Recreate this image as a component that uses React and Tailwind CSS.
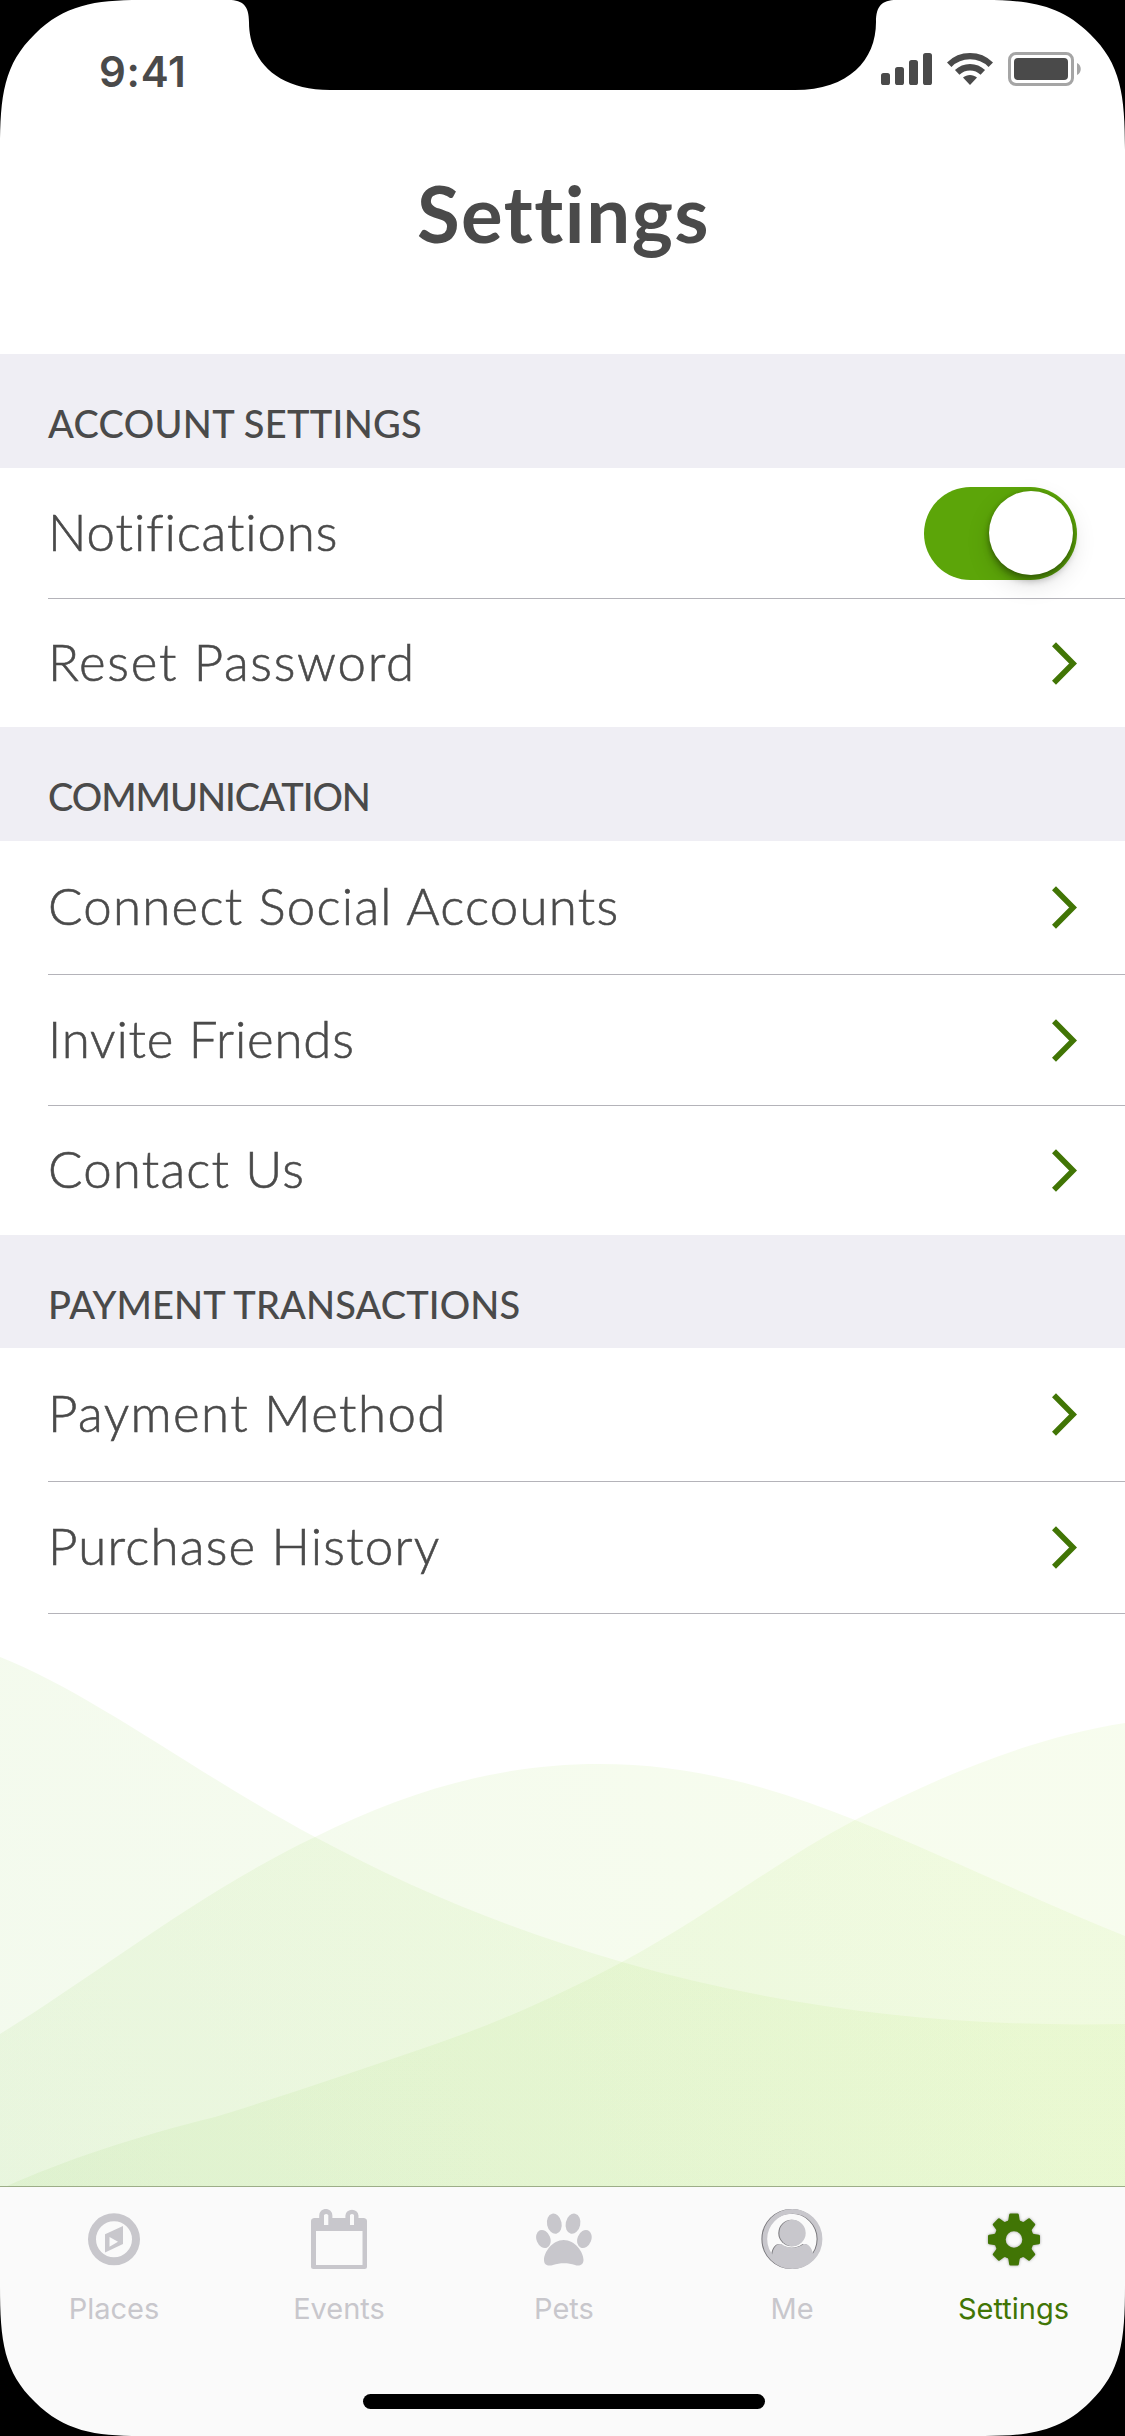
import React from "react";

const sections = [
  {
    title: "ACCOUNT SETTINGS",
    header: "h-[114px] tracking-[0.3px]",
    rows: [
      { label: "Notifications", size: "h-[131px]", text: "tracking-[0.9px]", line: true, toggle: true },
      { label: "Reset Password", size: "h-[128px]", text: "tracking-[1.7px]" },
    ],
  },
  {
    title: "COMMUNICATION",
    header: "h-[114px] tracking-[-1.05px]",
    rows: [
      { label: "Connect Social Accounts", size: "h-[134px]", text: "tracking-[1.25px]", line: true },
      { label: "Invite Friends", size: "h-[131px]", text: "tracking-[0.8px]", line: true },
      { label: "Contact Us", size: "h-[129px]", text: "tracking-[1.2px]" },
    ],
  },
  {
    title: "PAYMENT TRANSACTIONS",
    header: "h-[113px] tracking-[0.1px]",
    rows: [
      { label: "Payment Method", size: "h-[134px]", text: "tracking-[1.4px]", line: true },
      { label: "Purchase History", size: "h-[132px]", text: "tracking-[1.2px]", line: true },
    ],
  },
];

function Chevron() {
  return (
    <svg className="h-[43px] w-[25px]" viewBox="0 0 25 43" fill="none" stroke="#417505" strokeWidth="5.6">
      <path d="M2 2.2 21.1 21.5 2 40.8" />
    </svg>
  );
}

function Toggle() {
  return (
    <div className="flex h-[93px] w-[153px] items-center justify-end rounded-full bg-[#5ca509] pr-[4.5px]">
      <div className="h-[84px] w-[84px] rounded-full bg-white shadow-[0_9px_24px_rgba(0,0,0,0.13),0_6px_7px_rgba(0,0,0,0.25),0_1px_5px_rgba(0,0,0,0.22)]" />
    </div>
  );
}

function StatusIcons() {
  return (
    <div className="flex items-center">
      <svg className="h-[34px] w-[52px]" viewBox="0 0 52 34" fill="#4a4a4a">
        <rect x="0" y="21" width="9" height="12" rx="2.6" />
        <rect x="14" y="15" width="9" height="18" rx="2.6" />
        <rect x="28" y="8" width="9" height="25" rx="2.6" />
        <rect x="42" y="1" width="9" height="32" rx="2.6" />
      </svg>
      <svg className="ml-[14px] h-[34px] w-[46px]" viewBox="0 0 46 34" fill="none" stroke="#4a4a4a" strokeWidth="6.4">
        <path d="M2.2 12.7A29.6 29.6 0 0 1 43.8 12.7" />
        <path d="M10.2 20.4A18.3 18.3 0 0 1 35.8 20.4" />
        <path d="M23 33 16 25.6C20 22 26 22 30 25.6Z" fill="#4a4a4a" stroke="none" />
      </svg>
      <svg className="ml-[15px] h-[34px] w-[73px]" viewBox="0 0 73 34">
        <rect x="1.5" y="1.5" width="63" height="31" rx="6.5" fill="none" stroke="#a5a5a5" strokeWidth="3" />
        <rect x="6" y="6" width="54" height="22" rx="4" fill="#4a4a4a" />
        <path d="M69 11C74 13 74 21 69 23Z" fill="#a5a5a5" />
      </svg>
    </div>
  );
}

function PlacesIcon() {
  return (
    <svg className="h-[60px] w-[60px]" viewBox="0 0 60 60" fill="#c8c7cc">
      <circle cx="30" cy="30.3" r="22" fill="none" stroke="#c8c7cc" strokeWidth="8" />
      <path fillRule="evenodd" d="M21 25.2 39 17V35L21 43.6ZM25.5 28V37.7L34 32.7Z" />
    </svg>
  );
}

function EventsIcon() {
  return (
    <svg className="h-[60px] w-[60px]" viewBox="0 0 60 60" fill="#c8c7cc">
      <path
        fillRule="evenodd"
        d="M5 9H10.2V6.5A6.6 6.6 0 0 1 23.4 6.5V9H36.4V6.5A6.6 6.6 0 0 1 49.5 6.5V9H55Q58 9.5 58 12V57.5Q58 60 55.5 60H4.5Q2 60 2 57.5V12Q2 9.5 5 9ZM7 22V56H53.5V22ZM15 6V16H19.3V6Q17.2 3.8 15 6ZM41 6V16H45V6Q43 3.8 41 6Z"
      />
    </svg>
  );
}

function PetsIcon() {
  return (
    <svg className="h-[60px] w-[60px]" viewBox="0 0 60 60" fill="#c8c7cc">
      <ellipse cx="20.3" cy="14.7" rx="7.3" ry="10.2" transform="rotate(-12 20.3 14.7)" />
      <ellipse cx="39" cy="14.7" rx="7.3" ry="10.2" transform="rotate(12 39 14.7)" />
      <ellipse cx="9.4" cy="30" rx="6.9" ry="9.4" transform="rotate(-22 9.4 30)" />
      <ellipse cx="50.4" cy="30" rx="6.9" ry="9.4" transform="rotate(22 50.4 30)" />
      <path d="M29.7 31C41 31 49.5 43 49.5 51C49.5 56 45 57.6 41 56C34 53.7 26 53.7 19 56C14 57.6 10 56 10 51C10 43 18.5 31 29.7 31Z" />
    </svg>
  );
}

function MeIcon() {
  return (
    <svg className="h-[60px] w-[61px] overflow-visible drop-shadow-[-0.6px_0_0_#77767a]" viewBox="0 0 61 60" fill="#c8c7cc">
      <circle cx="30.4" cy="30" r="27.6" fill="none" stroke="#c8c7cc" strokeWidth="4.8" />
      <circle cx="30.5" cy="24" r="13.2" />
      <path d="M10 48C10.5 39 14 34.3 19.5 35C26 40 35 40 41.5 35C47 34.3 50.5 39 51.5 48C47 55 40 58.5 30.5 58.5C21 58.5 14 55 10 48Z" />
    </svg>
  );
}

function SettingsIcon() {
  return (
    <svg className="h-[60px] w-[60px] drop-shadow-[0_0_1.5px_rgba(0,0,0,0.35)]" viewBox="-30 -30.5 60 60" fill="#417505">
      <circle r="14" fill="none" stroke="#417505" strokeWidth="11.4" />
      {[0, 45, 90, 135, 180, 225, 270, 315].map((angle) => (
        <path key={angle} transform={`rotate(${angle})`} d="M-7.4-16.5Q-5.9-18-5.6-20L-4.8-25Q-4.6-26-3.6-26H3.6Q4.6-26 4.8-25L5.6-20Q5.9-18 7.4-16.5Z" />
      ))}
    </svg>
  );
}

const tabs = [
  { label: "Places", icon: PlacesIcon, color: "text-[#c8c7cc]" },
  { label: "Events", icon: EventsIcon, color: "text-[#c8c7cc]" },
  { label: "Pets", icon: PetsIcon, color: "text-[#c8c7cc]" },
  { label: "Me", icon: MeIcon, color: "text-[#c8c7cc]" },
  { label: "Settings", icon: SettingsIcon, color: "text-[#417505]" },
];

function Hills() {
  return (
    <svg className="min-h-0 w-full flex-1" viewBox="0 1614 1125 572" preserveAspectRatio="none">
      <defs>
        <linearGradient id="hill" gradientUnits="userSpaceOnUse" x1="0" y1="2186" x2="900" y2="1760">
          <stop offset="0" stopColor="#8ace54" />
          <stop offset="1" stopColor="#b0e65a" />
        </linearGradient>
      </defs>
      <g fill="url(#hill)" fillOpacity="0.1">
        <path d="M0 1657C90 1692 200 1776 315 1837C410 1888 510 1930 622 1962C780 2008 950 2028 1125 2024V2186H0Z" />
        <path d="M0 2034C100 1972 200 1892 315 1837C410 1790 500 1764 599 1764C690 1764 770 1786 855 1820C950 1858 1035 1900 1125 1936V2186H0Z" />
        <path d="M1125 1723C1030 1738 940 1776 855 1820C775 1862 705 1918 622 1962C560 1995 500 2022 430 2046C360 2070 290 2094 215 2117C140 2135 60 2162 7 2186H1125Z" />
      </g>
    </svg>
  );
}

function DeviceMask() {
  const corner = "M0 0H140C95 0 64 5 35 34C4 64 0 95 0 150Z";
  return (
    <svg className="pointer-events-none absolute inset-0 h-[2436px] w-[1125px]" viewBox="0 0 1125 2436">
      <path d={corner} />
      <path d={corner} transform="translate(1125 0) scale(-1 1)" />
      <path d={corner} transform="translate(0 2436) scale(1 -1)" />
      <path d={corner} transform="translate(1125 2436) scale(-1 -1)" />
      <path d="M229 0C243 0 249 6 249 22C249 60 276 90 330 90H795C849 90 876 60 876 22C876 6 882 0 896 0Z" />
    </svg>
  );
}

export default function App() {
  return (
    <div className="relative flex h-[2436px] w-[1125px] flex-col overflow-hidden bg-white font-['Lato',sans-serif] text-[#4a4a4a]">
      <div className="flex h-[138px] items-center justify-between pr-[44px] pl-[99px]">
        <span className="pt-[5px] font-['Inter',sans-serif] text-[42px] font-semibold tracking-[0.7px]">9:41</span>
        <StatusIcons />
      </div>
      <h1 className="flex h-[151px] items-center justify-center pl-[2px] text-[78px] font-bold tracking-[1.5px]">Settings</h1>
      <div className="h-[65px]" />

      {sections.map((section) => (
        <section key={section.title}>
          <h2 className={`flex items-center bg-[#efeef4] pt-[25px] pl-[48px] text-[38px] font-medium ${section.header}`}>
            {section.title}
          </h2>
          {section.rows.map((row) => (
            <div
              key={row.label}
              className={`ml-[48px] flex items-center justify-between pr-[48px] ${row.size} ${row.line ? "border-b border-[#b4b3b9]" : ""}`}
            >
              <span className={`pb-[2px] text-[51px] font-light [-webkit-text-stroke:0.6px_#4a4a4a] ${row.text}`}>{row.label}</span>
              {row.toggle ? <Toggle /> : <Chevron />}
            </div>
          ))}
        </section>
      ))}

      <Hills />

      <nav className="flex h-[250px] flex-col items-center border-t border-[#9cad87] bg-[#fafafa] pt-[22px] font-['Inter',sans-serif]">
        <div className="grid w-full grid-cols-[228px_222px_228px_228px_215px]">
          {tabs.map(({ label, icon: Icon, color }) => (
            <div key={label} className={`flex flex-col items-center ${color}`}>
              <Icon />
              <span className="mt-[20px] text-[29px] leading-[40px]">{label}</span>
            </div>
          ))}
        </div>
        <div className="mt-[65px] ml-[3px] h-[15px] w-[402px] rounded-full bg-black" />
      </nav>

      <DeviceMask />
    </div>
  );
}
